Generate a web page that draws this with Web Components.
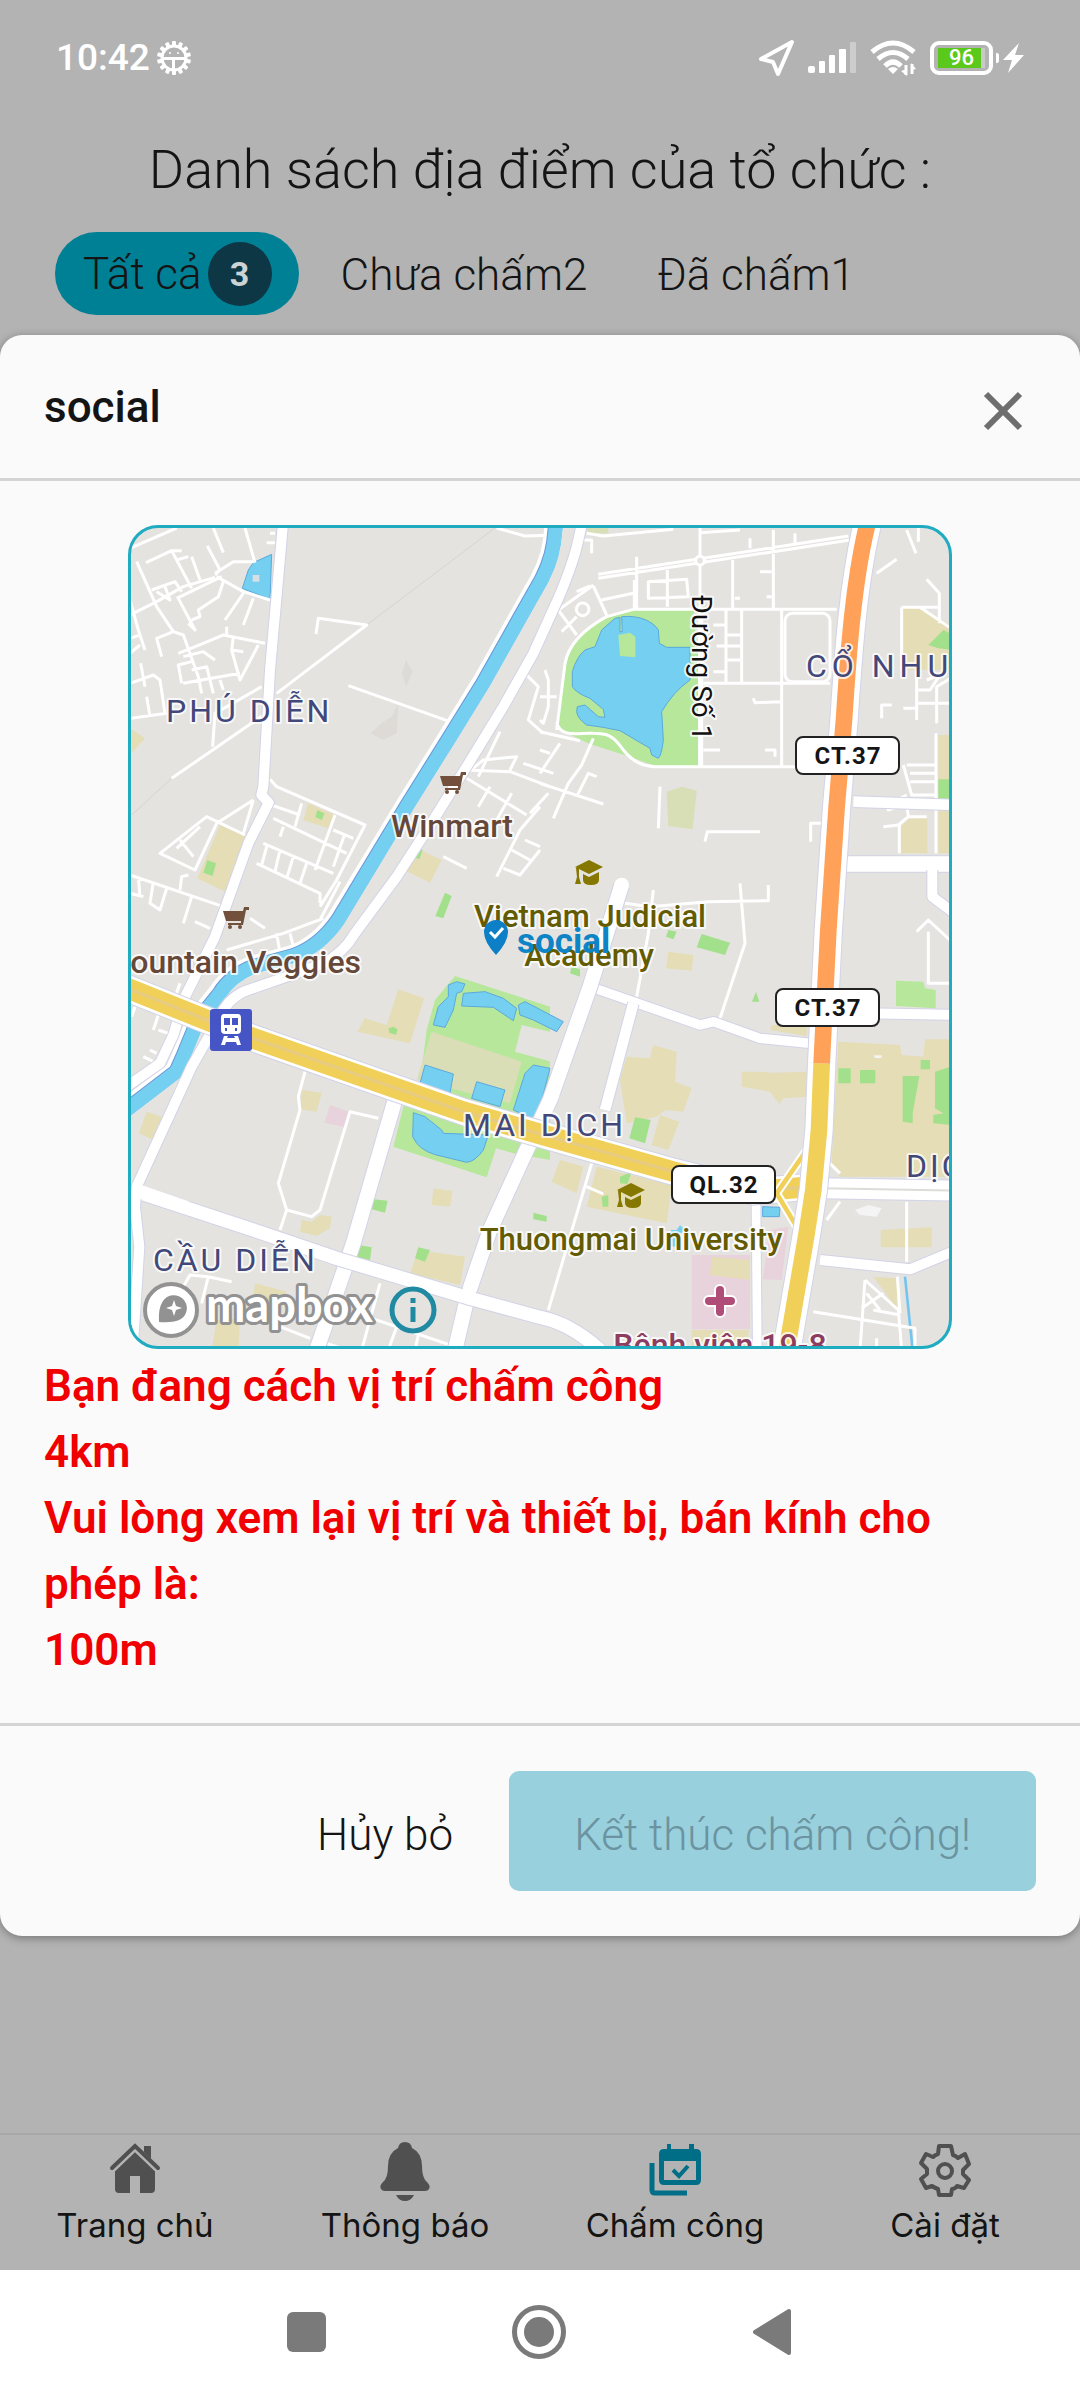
<!DOCTYPE html>
<html lang="vi">
<head>
<meta charset="utf-8">
<meta name="viewport" content="width=device-width, initial-scale=1">
<title>Chấm công</title>
<style>
  html { background: #b3b3b3; }
  body { margin: 0; min-height: 100vh; display: flex; flex-direction: column; background: #b3b3b3; color: #141414; font-family: Roboto, "Liberation Sans", sans-serif; }
  tab-bar { margin-top: auto; }
</style>
</head>
<body>
<status-bar time="10:42" battery="96"></status-bar>
<page-title>Danh sách địa điểm của tổ chức :</page-title>
<filter-row>
  <filter-chip active>Tất cả<span slot="count">3</span></filter-chip>
  <filter-chip>Chưa chấm<span slot="count">2</span></filter-chip>
  <filter-chip>Đã chấm<span slot="count">1</span></filter-chip>
</filter-row>
<modal-card>
  <span slot="title">social</span>
  <place-map></place-map>
  <warning-text>
    <span>Bạn đang cách vị trí chấm công</span>
    <span>4km</span>
    <span>Vui lòng xem lại vị trí và thiết bị, bán kính cho phép là:</span>
    <span>100m</span>
  </warning-text>
  <action-button slot="actions">Hủy bỏ</action-button>
  <action-button slot="actions" primary>Kết thúc chấm công!</action-button>
</modal-card>
<tab-bar>
  <tab-item icon="home">Trang chủ</tab-item>
  <tab-item icon="bell">Thông báo</tab-item>
  <tab-item icon="calendar">Chấm công</tab-item>
  <tab-item icon="gear">Cài đặt</tab-item>
</tab-bar>
<system-nav></system-nav>

<script>
function define(name, render) {
  customElements.define(name, class extends HTMLElement {
    constructor() {
      super();
      this.attachShadow({ mode: "open" });
    }
    connectedCallback() {
      this.shadowRoot.innerHTML = "<style>:host,*{box-sizing:border-box}svg{display:block}button{font:inherit;color:inherit;border:0;background:none;padding:0;margin:0}</style>" + render(this);
    }
  });
}

const gearTeeth = Array.from({ length: 14 }, (_, i) => `<rect x="-2" y="-17" width="4" height="5" rx="1" transform="rotate(${i * 360 / 14})"/>`).join("");

define("status-bar", el => `
<style>
  :host { display: flex; align-items: center; height: 116px; padding: 0 56px; color: #fff; }
  .left, .right { display: flex; align-items: center; }
  .left { gap: 7px; font-size: 37px; line-height: 44px; font-weight: 500; }
  .right { margin-left: auto; gap: 13px; }
  .battery { display: flex; align-items: center; gap: 3px; }
  .cell { border: 4px solid #fff; border-radius: 9px; padding: 3px 4px; width: 63px; }
  .level { display: block; background: linear-gradient(90deg, #5ac91b 92%, #c9c9c9 92%); height: 20px; line-height: 20px; font-size: 22px; font-weight: 500; text-align: center; }
  .tip { width: 3px; height: 10px; background: #fff; border-radius: 0 2px 2px 0; }
</style>
<div class="left"><span>${el.getAttribute("time")}</span>
  <svg width="34" height="36" viewBox="-17 -18 34 36" fill="#fff">${gearTeeth}<circle r="12" fill="none" stroke="#fff" stroke-width="3"/><path d="M-11-1H11V2H1V11H-2V2H-11Z"/><circle cx="-4" cy="-5" r="1"/><circle cx="4" cy="-5" r="1"/></svg>
</div>
<div class="right">
  <svg width="37" height="38" viewBox="0 0 37 38" fill="none" stroke="#fff" stroke-width="4" stroke-linejoin="round"><path d="M34 3 3 20 15 23 20 35Z"/></svg>
  <svg width="49" height="32" viewBox="0 0 49 32" fill="#fff"><rect y="24" width="7" height="7" rx="2"/><rect x="11" y="19" width="6" height="12" rx="1"/><rect x="21" y="13" width="6" height="18" rx="1"/><rect x="31" y="7" width="7" height="24" rx="1"/><rect x="42" width="6" height="31" rx="1" opacity=".35"/></svg>
  <svg width="47" height="36" viewBox="0 0 47 36" fill="none" stroke="#fff" stroke-width="5"><path d="M2 12Q23-6 44 12M8 19Q23 6 38 19M15 26Q23 18 31 26"/><path d="M23 34 18 29Q23 25 28 29Z" fill="#fff" stroke="none"/><path d="M36 25v10M42 24v10" stroke-width="3"/><path d="M31 31 37 36V29ZM41 23V30L46 29Z" fill="#fff" stroke="none"/></svg>
  <div class="battery"><div class="cell"><span class="level">${el.getAttribute("battery")}</span></div><div class="tip"></div>
  <svg width="22" height="32" viewBox="0 0 22 32" fill="#fff"><path d="M17 1 1 18H10L6 31 22 13H13Z"/></svg></div>
</div>`);

define("page-title", () => `
<style>:host { display: block; } h1 { margin: 0; font-size: 54px; line-height: 64px; font-weight: 300; text-align: center; padding: 22px 20px 30px; }</style>
<h1><slot></slot></h1>`);

define("filter-row", () => `
<style>:host { display: flex; gap: 14px; padding: 0 55px 20px; }</style><slot></slot>`);

define("filter-chip", () => `
<style>
  :host { display: block; }
  button { display: flex; align-items: center; height: 83px; padding: 2px 28px 0; border-radius: 42px; font-size: 44px; font-weight: 300; line-height: 50px; white-space: nowrap; }
  :host([active]) button { background: #008095; padding: 0 27px 0 28px; }
  :host([active]) .count { display: grid; place-items: center; width: 64px; height: 64px; border-radius: 50%; background: #0e3746; color: #ccd3d5; font-size: 34px; font-weight: 700; margin-left: 6px; }
</style>
<button type="button"><slot></slot><span class="count"><slot name="count"></slot></span></button>`);

define("modal-card", () => `
<style>
  :host { display: block; background: #fafafa; border-radius: 22px; box-shadow: 0 2px 10px rgba(0,0,0,.35); }
  header, footer { display: flex; align-items: center; }
  header { height: 146px; padding: 0 44px; border-bottom: 3px solid #d4d4d4; }
  h2 { margin: 0; font-size: 44px; line-height: 50px; font-weight: 500; }
  .close { margin: 8px 0 0 auto; padding: 13px; }
  main { padding: 44px 44px 40px; }
  footer { border-top: 3px solid #d4d4d4; height: 213px; justify-content: flex-end; padding: 0 44px; }
</style>
<header><h2><slot name="title"></slot></h2>
<button class="close" type="button" aria-label="Đóng"><svg width="40" height="40" viewBox="0 0 40 40" stroke="#6e6e6e" stroke-width="6"><path d="M3 3 37 37M37 3 3 37"/></svg></button></header>
<main><slot></slot></main>
<footer><slot name="actions"></slot></footer>`);

define("warning-text", () => `
<style>:host { display: block; color: #f00000; font-size: 44px; line-height: 66px; font-weight: 600; padding: 4px 16px 0 0; } ::slotted(span) { display: block; }</style>
<slot></slot>`);

define("action-button", el => `
<style>
  :host { display: block; }
  button { height: 120px; padding: 8px 56px 0; border-radius: 10px; font-size: 44px; font-weight: 300; line-height: 50px; white-space: nowrap; }
  :host([primary]) button { background: #99d0dd; color: #6c93a0; padding: 8px 65px 0; }
</style>
<button type="button" ${el.hasAttribute("primary") ? "disabled" : ""}><slot></slot></button>`);

const tabIcons = {
  home: `<g fill="#505050"><path d="M10 28 30 9 50 28V47Q50 51 46 51H35V34H25V51H14Q10 51 10 47Z"/><path d="M39 4H46V19L39 12Z"/><path d="M6 27 30 4 54 27" fill="none" stroke="#b3b3b3" stroke-width="9"/><path d="M39 4H46V17L39 10Z"/><path d="M7 26 30 4 53 26" fill="none" stroke="#505050" stroke-width="4" stroke-linecap="round"/></g>`,
  bell: `<path fill="#505050" d="M23 6Q24 0 30 0T37 6Q47 11 47 24Q47 36 52 40Q56 44 54 47Q53 49 50 49H10Q7 49 6 47Q4 44 8 40Q13 36 13 24Q13 11 23 6ZM21 53H39Q36 59 30 59T21 53Z"/>`,
  calendar: `<path fill="#006e86" fill-rule="evenodd" d="M22 2H26V7H44V2H49V7H51Q56 7 56 12V38Q56 43 51 43H19Q14 43 14 38V12Q14 7 19 7H22ZM19 19V38H51V19Z"/><path d="M7 21V48Q7 51 10 51H42" fill="none" stroke="#006e86" stroke-width="5"/><path d="M28 28 34 34 43 24" fill="none" stroke="#006e86" stroke-width="4"/>`,
  gear: `<g fill="none" stroke="#505050" stroke-width="4" stroke-linejoin="round"><path d="M24 4H36L38 13Q41 14 43 16L50 12 54 22 48 28V32L54 38 49 46 42 44Q40 47 37 47L36 53H24L23 47Q20 46 17 44L11 46 6 37 12 32V27L6 21 11 12 18 15Q20 13 23 12Z"/><circle cx="30" cy="29" r="7"/></g>`
};

define("tab-bar", () => `
<style>:host { display: block; border-top: 2px solid #a8a8a8; } nav { display: grid; grid-template-columns: repeat(4, 1fr); height: 135px; }</style>
<nav><slot></slot></nav>`);

define("tab-item", el => `
<style>
  :host { display: block; }
  a { display: flex; flex-direction: column; align-items: center; padding-top: 7px; gap: 3px; color: #141414; text-decoration: none; font-family: Inter, "Liberation Sans", sans-serif; font-size: 33px; line-height: 40px; white-space: nowrap; }
</style>
<a href="#${el.getAttribute("icon")}"><svg width="60" height="60" viewBox="0 0 60 60">${tabIcons[el.getAttribute("icon")]}</svg><slot></slot></a>`);

define("system-nav", () => `
<style>
  :host { display: flex; justify-content: center; align-items: flex-start; height: 130px; background: #fff; padding-top: 33px; gap: 173px; }
  button { width: 60px; height: 60px; }
</style>
<button type="button" aria-label="Recent"><svg width="60" height="60" viewBox="0 0 60 60"><rect x="10" y="9" width="39" height="40" rx="6" fill="#7a7a7a"/></svg></button>
<button type="button" aria-label="Home"><svg width="60" height="60" viewBox="0 0 60 60"><circle cx="29" cy="29" r="24.5" fill="none" stroke="#7a7a7a" stroke-width="5"/><circle cx="29" cy="29" r="15" fill="#7a7a7a"/></svg></button>
<button type="button" aria-label="Back"><svg width="60" height="60" viewBox="0 0 60 60"><path d="M12 29 46 8V50Z" fill="#7a7a7a" stroke="#7a7a7a" stroke-width="4" stroke-linejoin="round"/></svg></button>`);

/* One road is drawn as a casing, a body and, for trunk roads, a median. */
function road(d, width, color = "#fff", casing = "#d2d3e6") {
  return `<path d="${d}" stroke="${casing}" stroke-width="${width + 6}"/><path d="${d}" stroke="${color}" stroke-width="${width}"/>`;
}
const river = "M1310 0L1302 70Q1292 140 1245 215L1090 490L985 660L860 860L655 1200Q600 1280 520 1308L400 1340Q330 1370 300 1420L235 1500L190 1610L170 1655L20 1770";
const quay = "M1388 0L1375 60Q1360 130 1315 235L1240 400L1150 560L1040 740L940 900L830 1070L705 1240Q670 1300 610 1330L500 1370L370 1415Q320 1440 300 1490L215 1640L50 2000L45 2060L58 2180L38 2490";
const roadA = "M490 0L450 450L430 800L424 825L446 848L385 970L285 1250L195 1430L160 1545L120 1630L20 1700";
const ql32 = "M10 1400L240 1492L400 1555L800 1695L1030 1775L1260 1842L1660 1955L1900 2015L2070 2000";
const ct37 = "M2245 0C2200 180 2185 400 2172 600L2150 860L2125 1230L2105 1630";
const ct37s = "M2105 1630L2097 1830L2080 2010L2060 2140L2000 2490";

const cart = (x, y) => `<g transform="translate(${x} ${y})" fill="#73503c"><path d="M0 4H20L21 0H26V3H23L20 18H5V16H18V14H3Z"/><circle cx="7" cy="20" r="2"/><circle cx="17" cy="20" r="2"/></g>`;
const cap = (x, y) => `<g transform="translate(${x} ${y})" fill="#867700"><path d="M0 7 14 0 28 7 14 14Z"/><path d="M8 14 14 17 24 12V20Q24 25 16 25Q8 25 8 20Z"/><path d="M1 8H4V17L6 24H0L2 17Z"/></g>`;
const shield = (x, y, t) => `<g><rect x="${x}" y="${y}" width="103" height="37" rx="7" fill="#fff" stroke="#222" stroke-width="2"/><text class="shield" x="${x + 52}" y="${y + 27}">${t}</text></g>`;

define("place-map", () => `
<style>
  :host { display: block; margin: 0 84px; border: 3px solid #1fabc0; border-radius: 30px; overflow: hidden; aspect-ratio: 1; background: #e4e3e0; }
  svg { width: 100%; height: 100%; }
  text { font-family: Roboto, "Liberation Sans", sans-serif; font-size: 32px; paint-order: stroke; stroke: #fffc; stroke-width: 4px; stroke-linejoin: round; }
  .area { fill: #42487a; letter-spacing: 3px; }
  .wide { letter-spacing: 5px; }
  .shop { fill: #664839; font-weight: 500; }
  .school { fill: #635b00; font-weight: 500; font-size: 31px; }
  .street { font-size: 28px; fill: #111; }
  .place { font-size: 35px; font-weight: 700; fill: #0d84c6; stroke: none; }
  .mid { text-anchor: middle; }
  .shield { fill: #151515; font-size: 24px; font-weight: 700; text-anchor: middle; letter-spacing: 1px; stroke: none; }
  .logo { font-family: Lato, sans-serif; font-weight: 700; font-size: 47px; fill: #fff; stroke: #929292; stroke-width: 6px; }
  .water { fill: #75cff0; stroke: #5aa9dc; stroke-width: 3; }
  .sand { fill: #e4ddb5; } .park { fill: #b6e79b; } .lawn { fill: #a3e08c; } .pink { fill: #e8d2db; } .land { fill: #e4e3e0; }
  .minor { fill: none; stroke: #fff; stroke-width: 9; stroke-linejoin: round; }
  .major { fill: none; stroke-linejoin: round; }
</style>
<svg viewBox="131 528 818 818" preserveAspectRatio="xMidYMid slice" role="img" aria-label="Bản đồ">
<g transform="translate(120 520) scale(.333333)">
  <g>
    <path class="water" d="M455 103L400 128L385 150L367 205L450 238Z"/><path fill="#d6dfe3" d="M398 165h20v20h-20z"/>
    <path class="sand" d="M300 915L380 950L325 1120L232 1075ZM565 850L645 885L625 925L550 900ZM880 980L965 1020L930 1088L848 1048ZM30 625L75 655L35 700Z"/>
    <path class="lawn" d="M262 1020L288 1030L278 1068L250 1058ZM592 870L613 880L606 900L586 892ZM888 982L908 990L898 1018L883 1012ZM975 1118L995 1128L970 1195L946 1188Z"/>
    <path fill="#dedad6" d="M858 420L878 455L858 500L846 460ZM835 550L830 640L790 660L752 640L790 605L815 590Z"/>
  </g>
  <g transform="translate(1260 0)">
    <path class="park" d="M280 270H460L482 480V738H345L270 710L150 672L50 625L80 430Q95 350 200 290Z"/>
    <path class="water" d="M245 290C300 285 340 305 355 330L358 370L380 382L450 382V480Q400 515 365 575L370 660Q365 705 355 715L335 705L330 685L240 632L190 622L140 615Q112 595 110 575L112 560L135 555L175 590L195 592L190 568L150 535Q110 520 97 500V455Q110 410 135 390L165 380L185 330L225 295L240 292V335H247Z"/>
    <path class="park" d="M235 345L270 338L286 350V412L240 408Z"/>
    <path fill="#d8dfb6" d="M380 815L425 800L470 812L458 928L385 918ZM140 24H205V40H145Z"/>
    <path class="sand" d="M1085 262H1140L1240 320V450H1090ZM1195 645H1240V1000H1195ZM1082 920L1110 895H1162V1000H1082Z"/>
    <path class="lawn" d="M1165 375L1210 330L1240 345V390L1195 385ZM1195 778H1240V838H1195Z"/>
  </g>
  <g transform="translate(0 1230)">
    <path class="park" d="M1005 138L1290 230V690L1180 670L1128 655L1100 742L820 650L850 530L900 460L920 300L945 210Z"/>
    <path class="land" d="M1205 285L1330 315V405L1185 365Z"/><path fill="#d9deb7" d="M935 305L1205 395L1170 520L890 450Z"/>
    <path class="water" d="M985 165L1010 155L1035 162L1025 185L1010 190L1000 240L975 292L940 285L955 230L985 200ZM1030 190L1095 185L1150 205L1190 235L1180 272L1120 232L1025 228ZM1195 225L1215 215L1330 275L1310 305L1240 270L1200 255ZM915 405L1000 432L990 490L900 460ZM1070 455L1155 480L1140 530L1055 505ZM1215 430L1240 405L1290 415L1250 570L1180 540ZM880 548L915 560L965 600L970 610L1105 615L1090 660Q1065 695 1040 697L970 680Q915 670 890 640L878 620Z"/>
    <path class="sand" d="M835 178L912 205L870 340L712 305L735 265L800 285ZM545 480L605 488L590 545L540 538ZM80 545L125 560L100 630L57 610ZM545 870L575 875L600 855L635 860L630 895L590 918L540 905ZM940 775L997 783L990 830L935 825ZM895 960L1035 980L1020 1065L870 1030ZM290 1170L360 1165L355 1260H275ZM405 1060L500 1085L480 1160L395 1150Z"/>
    <path class="pink" d="M630 525L695 548L675 592L613 578Z"/>
    <path class="lawn" d="M805 295L820 290L833 298L828 315L808 308ZM895 952L930 960L915 995L885 985ZM762 808L803 812L795 848L755 838ZM715 945L755 952L750 990L705 980ZM1240 848L1280 858V875L1240 868Z"/>
  </g>
  <g transform="translate(1260 1230)">
    <path class="sand" d="M385 65L460 75L455 122L378 115ZM340 345L410 365L405 455L455 475L430 545L375 540L350 560L260 580L240 450L260 380L330 385ZM605 425H650L700 428L800 425V500L730 505L718 522L690 485L605 470ZM360 555L418 575L385 660L335 645ZM895 335L1080 345L1085 375L1150 380L1155 328H1240V740H900L875 700ZM695 285H800V318L690 300ZM60 690L130 710L110 790L35 755ZM170 710L395 765L380 880L140 830ZM1022 900L1175 892V952H1022ZM1000 1040L1072 1045L1070 1135Z"/>
    <path class="lawn" d="M485 12L570 38L555 75L470 52ZM385 0L410 5L400 28L378 20ZM285 562L332 570L315 640L268 625ZM895 415H932V460H895ZM960 420H1006V460H960ZM1142 390H1170V418H1142ZM1088 438H1138L1118 550V580L1088 575ZM1185 425L1240 408V585L1180 580V555L1210 550L1185 535ZM240 740L275 725L262 762L240 760ZM185 800L205 795V830H188ZM648 185L658 215H636ZM95 110L120 118V140L90 130Z"/>
    <path class="park" d="M1068 152L1150 155L1155 175L1187 180V235L1068 228Z"/>
    <path class="water" d="M668 830L720 832L718 860H668Z"/><path fill="#75cff0" d="M392 900h18l10-14l14 12l-18 20l-4 34l-18-4z"/>
    <path class="pink" d="M455 975H630V1198H455ZM690 900L745 890L725 1050L668 1048Z"/><path class="sand" d="M515 980L630 990V1050L510 1035ZM455 1200H625V1260H455Z"/>
    <path d="M1095 1040L1118 1260" stroke="#75c4ee" stroke-width="8"/>
    <path fill="#f4f4f4" d="M945 840L985 825L1025 835L1010 860L960 855ZM1000 376H1025V384H1005Z"/>
  </g>
  <path d="M1125 24L740 315M155 775L35 885" stroke="#dad2cf" stroke-width="3"/>
  <path class="minor" d="M30 85L170 24M50 125L110 260L160 335L190 345L235 470L245 520M78 128L155 92L215 205M155 92H185M170 120L205 110M262 78L300 150L285 165M305 170L170 235M285 172L190 200L110 245L30 285M280 24L310 98M375 24L405 128M215 110L240 180M285 160L340 125H400M290 170L370 215L450 240M95 210L165 185L185 215M110 215L150 240L135 200M310 185L295 230L235 270L240 290L215 300M370 220L315 300M400 235L370 315M175 235L225 330L205 310M30 240L55 330L75 390M30 400L60 375M30 355L60 345M160 335L110 355L125 410M175 400L250 370L310 345L435 370M320 320V345M340 350L335 390L360 480L415 375M335 390L370 395M190 490L360 460M190 410L250 395L285 420M185 490L175 435L215 425M215 450L260 440L280 520M62 430L75 500M30 490L100 465L120 480L135 580M30 595L140 580M80 530L90 590M300 480L310 510M425 500L285 580L278 680M155 775L430 585M470 520L740 315L595 295L588 342M685 497L990 605M1130 24L1215 48L1290 46M440 68H465M450 40H465M450 778L470 800L735 915L650 1080L600 1160M440 850L540 885M545 850L525 920M460 895L680 1000M430 970L640 1060M410 1030L600 1120V1150M645 885L585 1050M675 940L640 1040M640 930L700 955M490 920L480 950M440 980L425 1035M480 990L465 1055M520 1010L500 1075M560 1030L540 1090M660 1085L600 1200M400 840L290 910M400 840L370 940M375 945L260 890L120 1000L225 1050L290 910M180 960L220 1010M240 920L170 985M30 1065L310 1160M100 1085L90 1150L120 1170L140 1105M215 1130L190 1210M180 1110L185 1070L205 1065M30 1120L70 1130M55 1070L60 1130M390 1195L435 1225M225 1205L270 1225M320 1290L490 1240L610 1195M470 1240L480 1300M510 1240L520 1280M1140 635L1075 770M1040 760L1090 720L1190 710L1170 750M1040 750L1170 755L1290 800M1040 775L1220 885M1210 730L1300 760M1175 820L1130 900M1260 860L1200 930L1130 1070M1110 800L1075 860M1150 1045L1200 1065L1260 990M1175 990L1230 1020M1215 460L1255 500L1225 600L1270 640M1215 960L1260 980M970 1010L1040 1045"/>
  <path class="minor" transform="translate(1260 0)" d="M140 40L190 48L400 28M175 163L925 48M175 175L930 60M480 24V740M290 110V270M283 180V270M325 185L440 178L445 230L325 235ZM382 150V260M185 240L280 220M160 198L200 285M160 195L55 270L110 345M65 335L110 290M110 215L150 198M480 38L600 30M630 55V85M765 40V70M700 30V265M578 115V270M280 268H890M50 630L75 430Q90 350 200 290L280 268M50 605C60 660 130 635 160 640C200 640 220 645 250 690Q290 740 345 740H770M0 635L120 662M605 270V490M490 490H870M725 270V740M558 270V490M520 315H560M560 345H605M530 378H605M560 420H600M520 455H560M640 535L645 548L725 545M490 690H540M675 690H705V710M660 155H695M680 230H695M585 235H600M0 790L190 852M160 655L125 735L85 790L40 895M60 670L0 760M170 770L145 760L110 830M25 820L-30 880M0 690L30 700M360 800L355 925M495 965L502 935H660M812 965V910H845M255 1150L330 1160L505 1145L685 1142V1095M600 1090L615 1270L540 1495M340 1110L325 1240L290 1430M0 530H50M15 450L25 480V560L10 610L0 600M1100 30L1128 100M1135 24V65M1010 160L1070 118M1160 178L1198 220V310M1085 262H1195M1140 262L1240 330M1085 262V450M1130 455V600M1025 595V555H1055M1130 550H1240M1090 565H1130M1160 480L1200 465L1170 510H1135M1240 470L1190 500V610M1188 640V1000M1100 735H1185M1110 760H1185M1110 785H1185M1090 735L1115 825H1185M1100 825L1040 855L1045 870L1100 850L1105 890H1160M1105 890L1075 915L1030 920M1078 915V1000M1130 1235L1165 1200L1240 1270M1165 1235V1390H1240M120 60H155V100"/>
  <g class="minor" transform="translate(1260 0)"><rect x="735" y="280" width="135" height="205" rx="22"/><circle cx="480" cy="122" r="13" fill="#e4e3e0"/><circle cx="128" cy="268" r="19"/><path d="M482 270V740" stroke-width="15"/></g>
  <path class="minor" transform="translate(0 1230)" d="M555 425L535 500L540 540L475 760L500 840L575 860L600 840L690 545L775 565M500 840L480 900M130 210L100 300M180 160L160 215M115 300L145 310M45 230L35 260M70 380L100 395M90 360L110 370M265 1040L335 1055M265 1040L245 1120M190 1070L210 1035L265 1040M780 1060L725 1260M740 1160L990 1245M830 1190L805 1260M895 1215L885 1260M480 1190L570 1225M620 1240L680 1260"/>
  <path class="minor" transform="translate(1260 1230)" d="M155 700L90 920L25 1140M140 770L190 792M820 1145L1125 1195V1260M975 1050L1075 1140L1085 1260M975 1050L960 1260M1072 1040L1080 1150M965 1135L1030 1090M980 1090L1020 1140M1000 1140L1080 1155M1100 815V995M1010 1225V1260M860 870L900 815M870 700L900 730"/>
  <g class="major">
    <path d="${river}" stroke="#fff" stroke-width="56" transform="translate(-6 -4)"/>
    <path d="${river}" stroke="#6d98d8" stroke-width="44" transform="translate(-2 -1)"/><path d="${river}" stroke="#75cff0" stroke-width="42"/>
    ${road("M2200 845L2510 855", 32)}${road("M2180 1032H2510", 46)}${road("M2437 1050V1130L2510 1185", 30)}
    ${road("M1425 1405L1740 1515L1780 1505L1920 1555L2090 1572", 28)}${road("M1540 1450L1455 1770", 32)}${road("M2150 1478L2510 1485", 30)}
    ${road("M1505 1095L1410 1400L1290 1740L1215 1900L1110 2130L1045 2320L1005 2490", 44)}
    <circle cx="1505" cy="1095" r="22" fill="#fff"/>
    ${road("M825 1740L700 2170L590 2490", 44)}${road("M50 2015L400 2130L650 2215L1050 2335L1260 2392Q1350 2410 1440 2490", 40)}
    ${road("M1908 2050L1912 2490", 26)}${road("M2100 2220L2370 2248L2510 2190", 30)}${road("M2110 2005L2510 2012", 60)}
    <path d="M2110 2005L2510 2012" stroke="#dcdcd8" stroke-width="6"/>
    ${road(roadA, 30)}${road(quay, 30)}
    <path d="M825 1740L700 2170M1300 1720L1215 1900M1110 2130L1045 2320M60 2015L200 2063" stroke="#fff" stroke-width="40"/>
    ${road(ql32, 78)}
    <path d="${ql32}" stroke="#f1d05a" stroke-width="62"/><path d="${ql32}" stroke="#e6cb80" stroke-width="10"/>
    <path d="M2060 1890L1970 2020L2030 2120" stroke="#fff" stroke-width="26"/><path d="M2060 1890L1970 2020L2030 2120" stroke="#f1d05a" stroke-width="14"/>
    ${road(ct37s, 82)}${road(ct37, 82)}
    <path d="${ct37s}" stroke="#f1d05a" stroke-width="50"/><path d="${ct37}" stroke="#ffa159" stroke-width="50"/>
  </g>
</g>
${cart(440, 772)}${cart(223, 907)}${cap(575, 860)}${cap(617, 1183)}
<g><rect x="210" y="1009" width="42" height="42" rx="3" fill="#4655c5"/><path fill="#fff" fill-rule="evenodd" d="M224 1014H238Q241 1014 241 1018V1030Q241 1034 237 1034H225Q221 1034 221 1030V1018Q221 1014 224 1014ZM224 1018V1025H230V1018ZM232 1018V1025H238V1018ZM225 1028V1031H227V1028ZM235 1028V1031H237V1028Z"/><path fill="#fff" d="M224 1036H228L227 1038H235L234 1036H238L241 1045H237L236 1042H226L225 1045H221Z"/></g>
<path d="M720 1290V1312M709 1301H731" stroke="#fff" stroke-width="12" stroke-linecap="round"/><path d="M720 1290V1312M709 1301H731" stroke="#b04c78" stroke-width="8" stroke-linecap="round"/>
<text class="area" x="166" y="722">PHÚ DIỄN</text>
<text class="area wide" x="806" y="677">CỔ NHU</text>
<text class="area" x="463" y="1136">MAI DỊCH</text>
<text class="area" x="153" y="1271">CẦU DIỄN</text>
<text class="area" x="906" y="1177">DỊC</text>
<text class="shop mid" x="452" y="837">Winmart</text>
<text class="shop" x="361" y="973" text-anchor="end">Mountain Veggies</text>
<text class="school mid" x="590" y="927">Vietnam Judicial</text>
<text class="school mid" x="589" y="966">Academy</text>
<text class="school mid" x="631" y="1250">Thuongmai University</text>
<text class="mid" x="720" y="1356" fill="#8c3d60" font-weight="500">Bệnh viện 19-8</text>
<text class="street" transform="translate(692 595) rotate(90)">Đường Số 1</text>
${shield(796, 737, "CT.37")}${shield(776, 989, "CT.37")}${shield(672, 1166, "QL.32")}
<path d="M496 955Q484 942 484 932A12 12 0 0 1 508 932Q508 942 496 955Z" fill="#0c7fc6"/><path d="M490 932 495 937 503 928" fill="none" stroke="#fff" stroke-width="3"/>
<text class="place" x="517" y="953">social</text>
<g><circle cx="171" cy="1310" r="26" fill="#fff" stroke="#929292" stroke-width="4"/><path fill="#929292" d="M159 1322Q158 1308 163 1301A13 13 0 1 1 181 1319Q174 1323 159 1322Z"/><path fill="#fff" d="M174 1300 176 1306 182 1308 176 1310 174 1316 172 1310 166 1308 172 1306Z"/></g>
<text class="logo" x="206" y="1322">mapbox</text>
<g fill="none" stroke="#1f8aa2" stroke-width="5"><circle cx="413" cy="1310" r="21"/><path d="M413 1307V1322M413 1298V1303"/></g>
</svg>`);
</script>
</body>
</html>
